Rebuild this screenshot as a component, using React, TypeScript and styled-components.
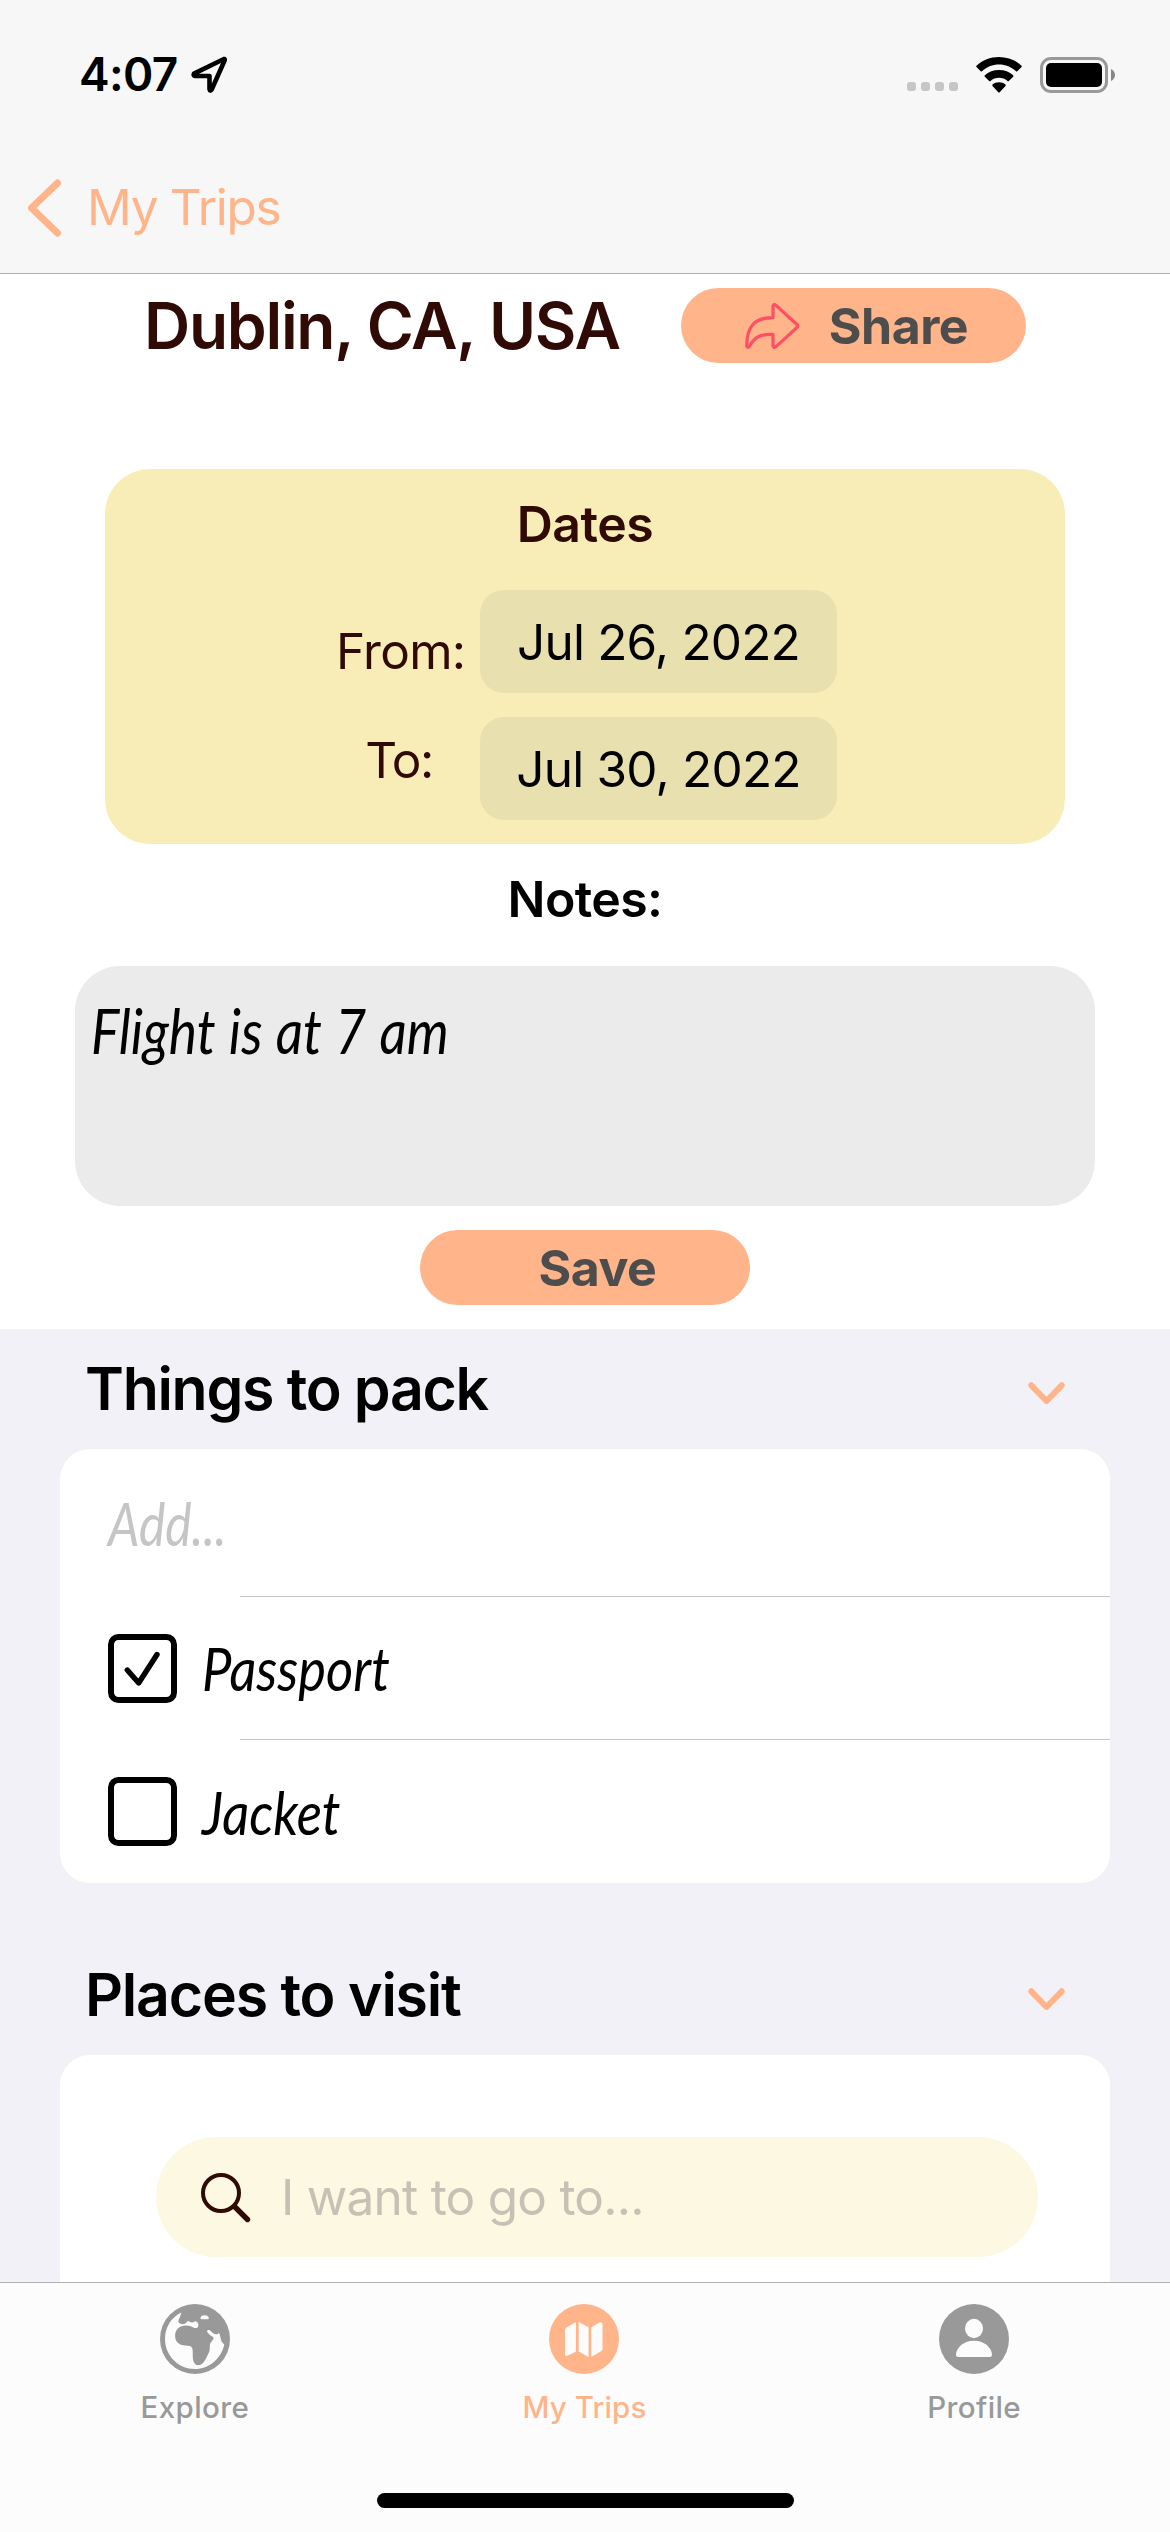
import React from "react";
import styled, { createGlobalStyle } from "styled-components";

const peach = "#ffb48a";
const brown = "#300b06";
const gray = "#999999";

const GlobalStyle = createGlobalStyle`
  * { box-sizing: border-box; }
  body {
    margin: 0;
    background: #fff;
    font-family: Inter, "Liberation Sans", sans-serif;
    color: #000;
  }
  button, input { font-family: inherit; border: 0; margin: 0; }
`;

const Screen = styled.div`
  width: 1170px;
  height: 2532px;
  display: flex;
  flex-direction: column;
  overflow: hidden;
  background: #fff;
`;

const Header = styled.header`
  height: 274px;
  flex: none;
  background: #f7f7f7;
  border-bottom: 1px solid #b0b0b2;
`;

const StatusBar = styled.div`
  height: 141px;
  padding: 8px 54px 0 79px;
  display: flex;
  align-items: center;
  justify-content: space-between;
`;

const StatusGroup = styled.div<{ $gap: number }>`
  display: flex;
  align-items: center;
  gap: ${(p) => p.$gap}px;
`;

const Label = styled.span<{ $size: number; $weight?: number; $track?: number; $color?: string }>`
  font-size: ${(p) => p.$size}px;
  font-weight: ${(p) => p.$weight ?? 400};
  letter-spacing: ${(p) => p.$track ?? 0}px;
  color: ${(p) => p.$color ?? "#000"};
  line-height: 1.2;
  white-space: nowrap;
`;

const Dots = styled.div`
  display: flex;
  gap: 5px;
  padding-top: 24px;
  margin-right: 17px;
`;
const Dot = styled.i`
  width: 9px;
  height: 9px;
  border-radius: 3px;
  background: #c6c6c6;
`;

const BackButton = styled.button`
  height: 132px;
  padding: 1px 0 0 28px;
  background: none;
  display: flex;
  align-items: center;
  gap: 25px;
`;

const TripPanel = styled.section`
  flex: none;
  height: 1055px;
  display: flex;
  flex-direction: column;
  align-items: center;
`;

const TitleRow = styled.div`
  width: 100%;
  height: 89px;
  padding: 14px 144px 0 144px;
  display: flex;
  justify-content: space-between;
  align-items: center;
`;

const Title = styled.h1`
  margin: 0;
  font-size: 64px;
  font-weight: 600;
  letter-spacing: -1.3px;
  line-height: 75px;
  white-space: nowrap;
  color: ${brown};
`;

const PillButton = styled.button<{ $width: number; $indent: number }>`
  width: ${(p) => p.$width}px;
  height: 75px;
  flex: none;
  border-radius: 37.5px;
  background: ${peach};
  display: flex;
  align-items: center;
  justify-content: center;
  gap: 29px;
  padding: 0 0 0 ${(p) => p.$indent}px;
`;

const DatesCard = styled.div`
  width: 960px;
  height: 375px;
  margin-top: 106px;
  border-radius: 45px;
  background: #f9edb7;
  display: flex;
  flex-direction: column;
  align-items: center;
  padding-top: 25px;
`;

const DatesGrid = styled.div`
  margin-top: 36px;
  padding-left: 3px;
  display: grid;
  grid-template-columns: 126px 357px;
  column-gap: 18px;
  row-gap: 24px;
`;

const DateCaption = styled.div<{ $top: number }>`
  padding-top: ${(p) => p.$top}px;
  text-align: center;
`;

const DateField = styled.div`
  height: 103px;
  padding-top: 2px;
  border-radius: 24px;
  background: #e8e0af;
  display: flex;
  align-items: center;
  justify-content: center;
`;

const NotesTitle = styled.h3`
  margin: 25px 0 0;
  line-height: 0;
`;

const NotesBox = styled.div`
  width: 1020px;
  height: 240px;
  margin: 37px 0 24px;
  border-radius: 45px;
  background: #ebebeb;
  padding: 28px 16px;
`;

const Handwriting = styled.span<{ $squeeze: number; $size?: number; $color?: string }>`
  display: inline-block;
  font-family: Lato, "Open Sans", sans-serif;
  font-style: italic;
  font-size: ${(p) => p.$size ?? 60}px;
  line-height: 72px;
  word-spacing: 1px;
  white-space: pre;
  color: ${(p) => p.$color ?? "#000"};
  transform: scaleX(${(p) => p.$squeeze});
  transform-origin: left center;
`;

const Lists = styled.main`
  flex: 1;
  min-height: 0;
  overflow: hidden;
  background: #f2f1f7;
  padding: 0 60px;
`;

const SectionHeader = styled.div<{ $height: number }>`
  height: ${(p) => p.$height}px;
  padding: 0 45px 24px 25px;
  display: flex;
  align-items: flex-end;
  justify-content: space-between;
`;

const ChevronBox = styled.div`
  height: 43px;
  display: flex;
`;

const Card = styled.div`
  border-radius: 30px;
  background: #fff;
`;

const Row = styled.div<{ $height: number }>`
  height: ${(p) => p.$height}px;
  padding: 0 48px;
  display: flex;
  align-items: center;
  gap: 25px;
`;

const Divider = styled.hr`
  height: 1px;
  margin: 0 0 0 180px;
  border: 0;
  background: #c6c6c8;
`;

const SearchArea = styled.div`
  height: 400px;
  padding: 82px 72px 0 96px;
`;

const SearchField = styled.div`
  height: 120px;
  border-radius: 60px;
  background: #fdf8e2;
  display: flex;
  align-items: center;
  padding: 1px 0 0 45px;
  gap: 30px;
`;

const TabBar = styled.nav`
  height: 250px;
  flex: none;
  border-top: 1px solid #b0b0b2;
  background: #fcfcfc;
  display: flex;
  flex-direction: column;
  align-items: center;
  justify-content: space-between;
  padding-bottom: 24px;
`;

const Tabs = styled.div`
  width: 1170px;
  padding-right: 1px;
  display: grid;
  grid-template-columns: repeat(3, 1fr);
`;

const Tab = styled.div`
  padding-top: 21px;
  display: flex;
  flex-direction: column;
  align-items: center;
  gap: 16px;
`;

const HomeIndicator = styled.div`
  width: 417px;
  height: 15px;
  border-radius: 8px;
  background: #000;
`;

const LocationIcon = () => (
  <svg width="36" height="37" viewBox="0 0 36 37" fill="none">
    <path d="M33 3 3 17.6 Q2 19.6 4 20 H18.5 V33 Q19 36 20.7 33.5 L33.6 4.5 Q34 2.6 33 3Z" stroke="#000" strokeWidth="4.6" strokeLinejoin="round" />
  </svg>
);

const WifiIcon = () => (
  <svg width="48" height="36" viewBox="0 0 48 36" fill="#000">
    <path d="M24 7.6c6.5 0 12.5 2.5 17 6.7.4.4 1 .4 1.3 0l4.2-4.2c.4-.4.4-1 0-1.4C40.5 3.1 32.6 0 24 0S7.5 3.1 1.5 8.700c-.4.4-.4 1 0 1.400l4.200 4.200c.3.400.9.400 1.300 0 4.500-4.200 10.500-6.700 17-6.700Z" />
    <path d="M24 20.800c3.200 0 6.200 1.200 8.500 3.200.4.400 1 .3 1.300 0l4.400-4.300c.4-.4.4-1 0-1.400-3.800-3.400-8.700-5.300-14.200-5.300s-10.400 1.900-14.200 5.300c-.4.4-.4 1 0 1.400l4.400 4.300c.3.300.9.400 1.300 0 2.300-2 5.300-3.200 8.500-3.200Z" />
    <path d="M30.500 28.900c.4-.4.400-1 0-1.400-1.800-1.400-4-2.200-6.500-2.200s-4.700.8-6.500 2.200c-.4.4-.4 1 0 1.400l5.800 6.300c.4.4 1 .4 1.400 0l5.800-6.300Z" />
  </svg>
);

const BatteryIcon = () => (
  <svg width="76" height="36" viewBox="0 0 76 36">
    <rect x="1.5" y="1.5" width="65" height="33" rx="9.5" fill="none" stroke="#999" strokeWidth="3" />
    <rect x="6" y="6" width="56" height="24" rx="5" fill="#000" />
    <path d="M71 12v12c2.400-1 4-3.400 4-6s-1.600-5-4-6Z" fill="#888" />
  </svg>
);

const BackIcon = () => (
  <svg width="34" height="58" viewBox="0 0 34 58" fill="none">
    <path d="M29.5 4 3.5 29 29.5 54" stroke={peach} strokeWidth="7" strokeLinecap="round" strokeLinejoin="round" />
  </svg>
);

const ShareIcon = () => (
  <svg width="55" height="46" viewBox="0 0 55 46" fill="none">
    <path d="M28 2.8Q29 .6 31 2.4L52 21.5Q53.5 23 52 24.5L31 43.6Q29 45.4 28 43.2V31.4C15 31 9.5 34 4.5 43.2Q2.6 45.4 1.7 43.2C1.7 23.5 9.5 14.6 28 14.6Z" stroke="#ff4f64" strokeWidth="3.2" strokeLinejoin="round" />
  </svg>
);

const ChevronDown = () => (
  <svg width="37" height="22" viewBox="0 0 37 22" fill="none">
    <path d="M3.3 3.3 18.5 19 33.7 3.3" stroke={peach} strokeWidth="6" strokeLinecap="round" strokeLinejoin="round" />
  </svg>
);

const Checkbox = ({ checked }: { checked?: boolean }) => (
  <svg width="69" height="69" viewBox="0 0 69 69" fill="none" stroke="#000">
    <rect x="3" y="3" width="63" height="63" rx="7.5" strokeWidth="6" />
    {checked && <path d="M19.3 36 30.7 49 49 20.5" strokeWidth="5.4" strokeLinecap="round" strokeLinejoin="round" />}
  </svg>
);

const SearchIcon = () => (
  <svg width="50" height="50" viewBox="0 0 50 50" fill="none" stroke={brown}>
    <circle cx="20" cy="20" r="18" strokeWidth="4" />
    <path d="M33.5 33.5 46.5 46.5" strokeWidth="5.4" strokeLinecap="round" />
  </svg>
);

const GlobeIcon = () => (
  <svg width="70" height="70" viewBox="0 0 70 70">
    <circle cx="35" cy="35" r="35" fill={gray} />
    <path
      d="M21.300 8.500C11 13.500 5 23.500 5 35c0 16.700 13.500 30 30 30 14 0 26-10 29.300-24.500-1.500-1.500-2.800-3-3.300-4.500-.6-2-.8-5.500-2.200-7.300-.6 1-1.200 1.500-2 1.600-1.500.2-2.800-.2-4-1.300-1.200-1-2.200-2.200-3.600-2.900-1.500-.5-2.500.6-2 1.900.8 1.500 2.800 3 4.300 4 1.800 1 2.300 1.800 2 2.800-1 2-3.300 3.700-3.600 6-.3 3.500.3 5.500-1 7.800-1.500 2.900-4 10-7.800 11.900-3.200 1.400-6.300.9-7.600-3.300-1.300-4-.3-9.500-1.100-12.400-.7-2.600-2.300-3-5-3.100-5.600-.2-12.300-1.700-12.300-9.700 0-7 4.700-10.300 10.700-10.500 4-.1 5.500 1.400 8.800 2.400 1.800.5 3.400-.3 3.700-2 .4-2.500-.5-4-2.600-4.700-1.600-.4-2.600 1.400-4.300 1.300-1.500-.2-1.800-1.400-3.300-1.400-1.600.1-1.700 2.600-4 3-3.500.5-6.500-1-5.500-4 .8-2.300 2-3.500 2.700-7.500Z"
      fill="#fcfcfc"
    />
    <path d="M40.500 13.700c.7-3.200 7.300-3.300 8.300 0 .4 2.300-2.500 1.500-4.300 1.500s-4.400.8-4-1.500Z" fill="#fcfcfc" />
  </svg>
);

const MapIcon = () => (
  <svg width="70" height="70" viewBox="0 0 70 70">
    <circle cx="35" cy="35" r="35" fill={peach} />
    <path d="M27 18 17.5 23.5Q16 24.5 16 26V50.5Q16.5 53 19 51.5L27 47.5Z M29.7 18 39.6 23.3V53L29.7 47.5Z M42.3 23.3 50.5 18.5Q53.3 17.3 53.5 20V45Q53.5 46.5 52 47.3L42.3 53Z" fill="#fcfcfc" />
  </svg>
);

const ProfileIcon = () => (
  <svg width="70" height="70" viewBox="0 0 70 70">
    <circle cx="35" cy="35" r="35" fill={gray} />
    <ellipse cx="35" cy="24.5" rx="9" ry="9.7" fill="#fcfcfc" />
    <path d="M17 50.5C17.5 43 25 36.7 35 36.7S52.500 43 53 50.5Q53 53 50.5 53H19.5Q17 53 17 50.5Z" fill="#fcfcfc" />
  </svg>
);

export default function App() {
  return (
    <>
      <GlobalStyle />
      <Screen>
        <Header>
          <StatusBar>
            <StatusGroup $gap={14}>
              <Label $size={46} $weight={600} $track={-0.7}>4:07</Label>
              <LocationIcon />
            </StatusGroup>
            <StatusGroup $gap={17}>
              <StatusGroup $gap={0}>
                <Dots>
                  <Dot />
                  <Dot />
                  <Dot />
                  <Dot />
                </Dots>
                <WifiIcon />
              </StatusGroup>
              <BatteryIcon />
            </StatusGroup>
          </StatusBar>
          <BackButton>
            <BackIcon />
            <Label $size={49.5} $track={-1.3} $color={peach}>My Trips</Label>
          </BackButton>
        </Header>

        <TripPanel>
          <TitleRow>
            <Title>Dublin, CA, USA</Title>
            <PillButton $width={345} $indent={6}>
              <ShareIcon />
              <Label $size={50} $weight={700} $track={-0.5} $color="#4d4d4d">Share</Label>
            </PillButton>
          </TitleRow>

          <DatesCard>
            <Label $size={50} $weight={600} $track={-0.5} $color={brown}>Dates</Label>
            <DatesGrid>
              <DateCaption $top={32}><Label $size={49.5} $track={-0.7} $color={brown}>From:</Label></DateCaption>
              <DateField><Label $size={49.5} $track={-0.8}>Jul 26, 2022</Label></DateField>
              <DateCaption $top={14}><Label $size={49.5} $track={-1.5} $color={brown}>To:</Label></DateCaption>
              <DateField><Label $size={49.5} $track={-0.8}>Jul 30, 2022</Label></DateField>
            </DatesGrid>
          </DatesCard>

          <NotesTitle><Label $size={50} $weight={600} $track={-0.6}>Notes:</Label></NotesTitle>
          <NotesBox>
            <Handwriting $squeeze={0.86} $size={62}>Flight is at 7 am</Handwriting>
          </NotesBox>
          <PillButton $width={330} $indent={25}>
            <Label $size={50} $weight={700} $track={-0.5} $color="#4d4d4d">Save</Label>
          </PillButton>
        </TripPanel>

        <Lists>
          <SectionHeader $height={120}>
            <Label $size={59} $weight={600} $track={-1.3}>Things to pack</Label>
            <ChevronBox><ChevronDown /></ChevronBox>
          </SectionHeader>
          <Card>
            <Row $height={147}>
              <Handwriting $squeeze={0.83} $color="#c5c5c7">Add...</Handwriting>
            </Row>
            <Divider />
            <Row $height={142}>
              <Checkbox checked />
              <Handwriting $squeeze={0.875}>Passport</Handwriting>
            </Row>
            <Divider />
            <Row $height={143}>
              <Checkbox />
              <Handwriting $squeeze={0.88}>Jacket</Handwriting>
            </Row>
          </Card>
          <SectionHeader $height={172}>
            <Label $size={59} $weight={600} $track={-1.2}>Places to visit</Label>
            <ChevronBox><ChevronDown /></ChevronBox>
          </SectionHeader>
          <Card>
            <SearchArea>
              <SearchField>
                <SearchIcon />
                <Label $size={49.5} $track={-0.75} $color="#c5c1b4">I want to go to...</Label>
              </SearchField>
            </SearchArea>
          </Card>
        </Lists>

        <TabBar>
          <Tabs>
            <Tab>
              <GlobeIcon />
              <Label $size={29.5} $weight={500} $track={0.4} $color={gray}>Explore</Label>
            </Tab>
            <Tab>
              <MapIcon />
              <Label $size={29.5} $weight={500} $track={0.15} $color={peach}>My Trips</Label>
            </Tab>
            <Tab>
              <ProfileIcon />
              <Label $size={29.5} $weight={500} $track={0.4} $color={gray}>Profile</Label>
            </Tab>
          </Tabs>
          <HomeIndicator />
        </TabBar>
      </Screen>
    </>
  );
}
